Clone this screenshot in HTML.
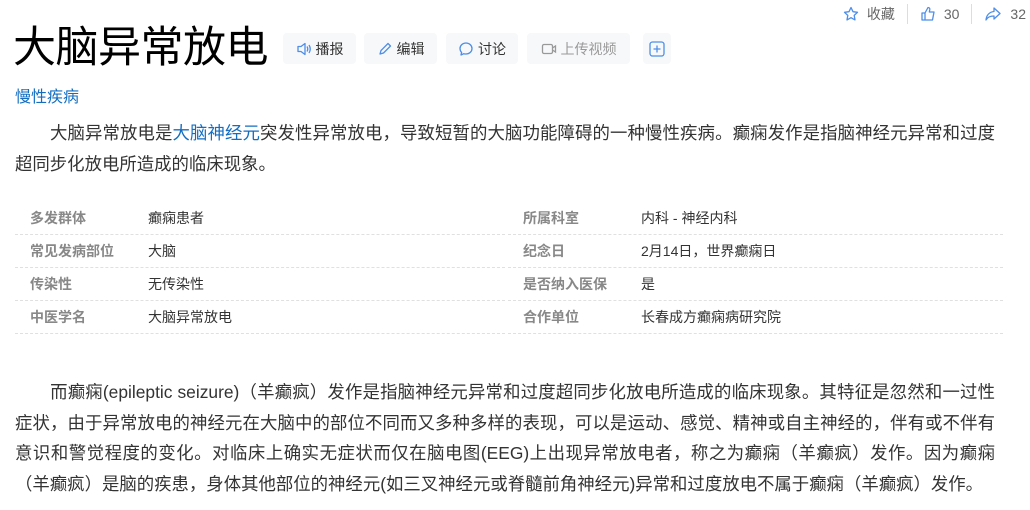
<!DOCTYPE html>
<html><head><meta charset="utf-8"><style>
*{margin:0;padding:0;box-sizing:border-box}
body{width:1030px;height:510px;background:#fff;font-family:"Liberation Sans","Noto Sans CJK SC",sans-serif;color:#333;position:relative;overflow:hidden}
.a{position:absolute}
.top{top:4px;right:0;font-size:14px;color:#666;display:flex;align-items:center;height:20px}
.top span{display:flex;align-items:center;gap:8px}
.sep{width:1px;height:20px;background:#ddd;margin:0 12px}
h1{position:absolute;left:13px;top:20px;font-size:43px;font-weight:normal;color:#000;line-height:56px;letter-spacing:-0.5px}
.btn{position:absolute;top:33px;height:31px;background:#f7f8fa;border-radius:4px;font-size:14px;color:#333;display:flex;align-items:center;justify-content:center;gap:4px}
.btn svg{flex:none}
.sub{left:15px;top:83px;font-size:16px;color:#136ec2}
.p{position:absolute;left:15px;width:980px;font-size:17.4px;color:#333}
.p div{text-align:justify;text-align-last:justify;white-space:nowrap}
.p div.l{text-align-last:left}
.row{position:absolute;height:33px;font-size:14px;border-bottom:1px dashed #e0e0e0;display:flex;align-items:center}
.row b{font-weight:bold;color:#888;width:133px;padding-left:15px;font-size:14px;flex:none}
.row i{font-style:normal;color:#333}
a{color:#136ec2;text-decoration:none}
</style></head><body>
<div class="a top">
<span><svg width="16" height="16" viewBox="0 0 16 16"><path d="M8 1.5l2 4.2 4.5.6-3.3 3.1.8 4.5L8 11.7l-4 2.2.8-4.5L1.5 6.3 6 5.7z" fill="none" stroke="#4e8ee8" stroke-width="1.3" stroke-linejoin="round"/></svg>收藏</span>
<div class="sep"></div>
<span><svg width="16" height="16" viewBox="0 0 16 16"><path d="M2 7h3v7H2zM5 7l3-5.5c1.2 0 2 .8 1.8 2L9.3 6H14l-1.5 8H5" fill="none" stroke="#4e8ee8" stroke-width="1.3" stroke-linejoin="round"/></svg>30</span>
<div class="sep"></div>
<span style="margin-right:4px"><svg width="18" height="16" viewBox="0 0 18 16"><path d="M10 2l6 5.5-6 5.5V10C6 10 3.5 11 2 14c.5-5 3.5-8 8-8.5z" fill="none" stroke="#4e8ee8" stroke-width="1.3" stroke-linejoin="round"/></svg>32</span>
</div>
<h1>大脑异常放电</h1>
<div class="btn" style="left:283px;width:73px"><svg width="16" height="16" viewBox="0 0 16 16"><path d="M2 5.5h3l4-3v11l-4-3H2z" fill="none" stroke="#4e8ee8" stroke-width="1.3" stroke-linejoin="round"/><path d="M11 5.5q1.5 2.5 0 5M13 4q2.5 4 0 8" fill="none" stroke="#4e8ee8" stroke-width="1.3"/></svg>播报</div>
<div class="btn" style="left:364px;width:73px"><svg width="16" height="16" viewBox="0 0 16 16"><path d="M3 13l1-3.5 7-7 2.5 2.5-7 7z" fill="none" stroke="#4e8ee8" stroke-width="1.3" stroke-linejoin="round"/></svg>编辑</div>
<div class="btn" style="left:446px;width:72px"><svg width="16" height="16" viewBox="0 0 16 16"><path d="M8 2c3.4 0 6 2.4 6 5.5S11.4 13 8 13c-.8 0-1.5-.1-2.2-.3L3 14l.6-2.6C2.6 10.4 2 9 2 7.5 2 4.4 4.6 2 8 2z" fill="none" stroke="#4e8ee8" stroke-width="1.3" stroke-linejoin="round"/></svg>讨论</div>
<div class="btn" style="left:527px;width:103px;color:#999"><svg width="16" height="16" viewBox="0 0 16 16"><rect x="1.5" y="3.5" width="10" height="9" rx="1.5" fill="none" stroke="#999" stroke-width="1.3"/><path d="M11.5 7l3-2v6l-3-2" fill="none" stroke="#999" stroke-width="1.3"/></svg>上传视频</div>
<div class="btn" style="left:643px;width:28px"><svg width="18" height="18" viewBox="0 0 18 18"><rect x="2" y="2" width="14" height="14" rx="2.5" fill="none" stroke="#4e8ee8" stroke-width="1.3"/><path d="M9 5.5v7M5.5 9h7" stroke="#4e8ee8" stroke-width="1.3"/></svg></div>
<div class="a sub">慢性疾病</div>
<div class="p" style="top:118px;line-height:31px">
<div>　　大脑异常放电是<a>大脑神经元</a>突发性异常放电，导致短暂的大脑功能障碍的一种慢性疾病。癫痫发作是指脑神经元异常和过度</div>
<div class="l">超同步化放电所造成的临床现象。</div>
</div>
<div class="row" style="left:15px;top:202px;width:490px"><b>多发群体</b><i>癫痫患者</i></div>
<div class="row" style="left:15px;top:235px;width:490px"><b>常见发病部位</b><i>大脑</i></div>
<div class="row" style="left:15px;top:268px;width:490px"><b>传染性</b><i>无传染性</i></div>
<div class="row" style="left:15px;top:301px;width:490px"><b>中医学名</b><i>大脑异常放电</i></div>
<div class="row" style="left:508px;top:202px;width:495px"><b>所属科室</b><i>内科 - 神经内科</i></div>
<div class="row" style="left:508px;top:235px;width:495px"><b>纪念日</b><i>2月14日，世界癫痫日</i></div>
<div class="row" style="left:508px;top:268px;width:495px"><b>是否纳入医保</b><i>是</i></div>
<div class="row" style="left:508px;top:301px;width:495px"><b>合作单位</b><i>长春成方癫痫病研究院</i></div>
<div class="p" style="top:377px;line-height:30.5px">
<div>　　而癫痫(epileptic seizure)（羊癫疯）发作是指脑神经元异常和过度超同步化放电所造成的临床现象。其特征是忽然和一过性</div>
<div>症状，由于异常放电的神经元在大脑中的部位不同而又多种多样的表现，可以是运动、感觉、精神或自主神经的，伴有或不伴有</div>
<div>意识和警觉程度的变化。对临床上确实无症状而仅在脑电图(EEG)上出现异常放电者，称之为癫痫（羊癫疯）发作。因为癫痫</div>
<div class="l">（羊癫疯）是脑的疾患，身体其他部位的神经元(如三叉神经元或脊髓前角神经元)异常和过度放电不属于癫痫（羊癫疯）发作。</div>
</div>
</body></html>
